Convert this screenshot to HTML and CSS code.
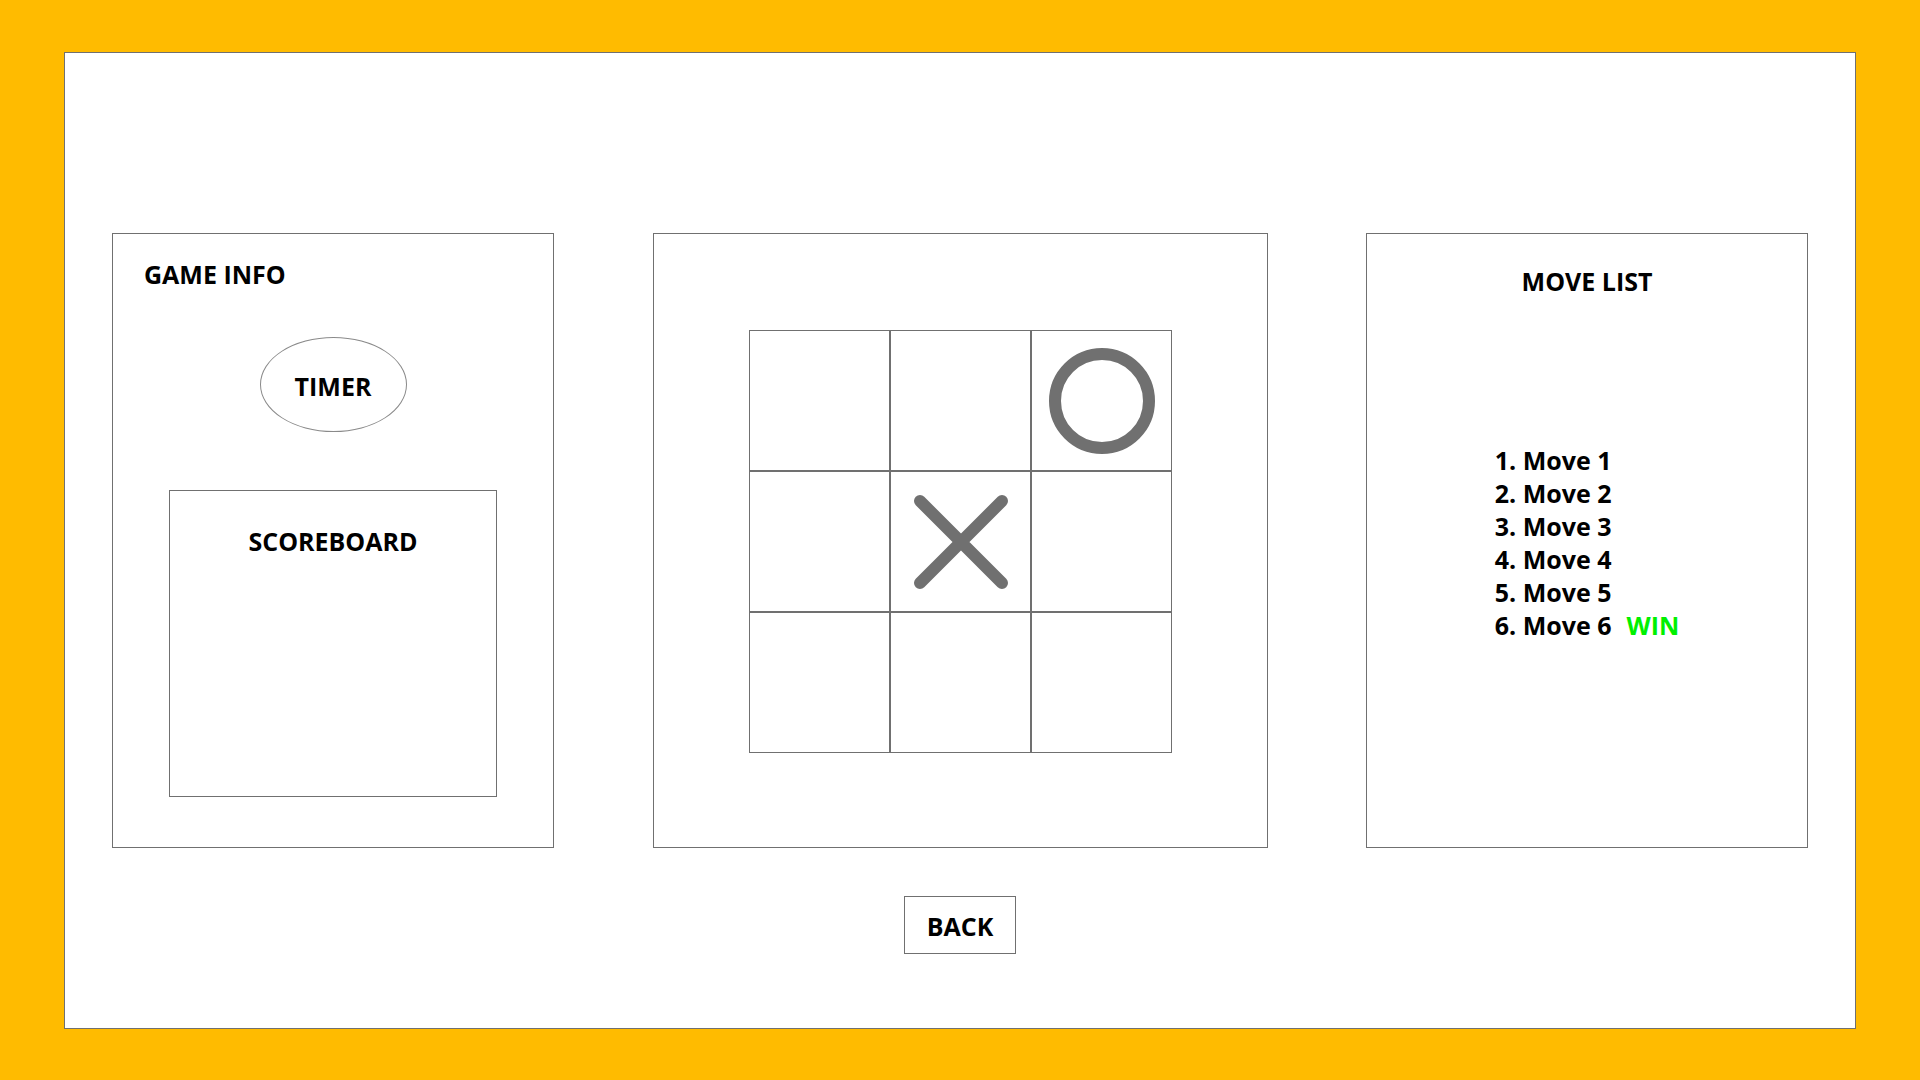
FILE: index.html
```html
<!DOCTYPE html>
<html lang="en">
<head>
<meta charset="utf-8">
<title>Tic Tac Toe</title>
<link rel="stylesheet" href="styles.css">
</head>
<body>
<main class="frame">
  <div class="cards">
    <section class="card info">
      <h2 class="info-title">GAME INFO</h2>
      <div class="timer">TIMER</div>
      <div class="scoreboard">
        <h3 class="score-title">SCOREBOARD</h3>
      </div>
    </section>
    <section class="card board-card">
      <div class="board">
        <div class="cell"></div>
        <div class="cell"></div>
        <div class="cell">
          <svg class="mark" viewBox="0 0 139 139" width="139" height="139"><circle cx="70" cy="70" r="47" fill="none" stroke="#707070" stroke-width="12"/></svg>
        </div>
        <div class="cell"></div>
        <div class="cell">
          <svg class="mark" viewBox="0 0 139 139" width="139" height="139"><path d="M29 29 L111 111 M111 29 L29 111" fill="none" stroke="#707070" stroke-width="12" stroke-linecap="round"/></svg>
        </div>
        <div class="cell"></div>
        <div class="cell"></div>
        <div class="cell"></div>
        <div class="cell"></div>
      </div>
    </section>
    <section class="card moves">
      <h2 class="moves-title">MOVE LIST</h2>
      <ol class="move-list">
        <li>1. Move 1</li>
        <li>2. Move 2</li>
        <li>3. Move 3</li>
        <li>4. Move 4</li>
        <li>5. Move 5</li>
        <li>6. Move 6<span class="win">WIN</span></li>
      </ol>
    </section>
  </div>
  <div class="actions">
    <button class="back" type="button">BACK</button>
  </div>
</main>
</body>
</html>
```
FILE: styles.css
```css
* { box-sizing: border-box; }
html, body { margin: 0; padding: 0; }
body {
  background: #ffbb00;
  font-family: "Open Sans", "Noto Sans", "Liberation Sans", sans-serif;
  font-weight: 700;
  color: #000;
  padding: 52px 64px 51px;
  height: 1080px;
}
.frame {
  background: #fff;
  border: 1px solid #707070;
  height: 977px;
  padding: 180px 47px 0;
}
.cards {
  display: flex;
  justify-content: space-between;
}
.card {
  border: 1px solid #707070;
  height: 615px;
  background: #fff;
}
.info, .moves { width: 442px; }
.board-card { width: 615px; }

.info {
  display: flex;
  flex-direction: column;
  padding: 24px 0 0 31px;
}
.info-title, .moves-title, .score-title {
  margin: 0;
  font-size: 25px;
  line-height: 32px;
  font-weight: 700;
}
.timer {
  align-self: center;
  margin: 47px 0 0 -31px;
  width: 147px;
  height: 95px;
  border: 1px solid #8a8a8a;
  border-radius: 50%;
  display: flex;
  align-items: center;
  justify-content: center;
  font-size: 25px;
  padding-top: 3px;
}
.scoreboard {
  align-self: center;
  margin: 58px 0 0 -31px;
  width: 328px;
  height: 307px;
  border: 1px solid #707070;
  padding-top: 34px;
  text-align: center;
}

.board-card {
  display: flex;
  align-items: center;
  justify-content: center;
  padding-top: 1px;
}
.board {
  display: grid;
  grid-template-columns: repeat(3, 141px);
  grid-template-rows: repeat(3, 141px);
}
.cell {
  border: 1px solid #707070;
  display: flex;
  align-items: center;
  justify-content: center;
}
.mark { display: block; }

.moves {
  display: flex;
  flex-direction: column;
  align-items: center;
  padding-top: 31px;
}
.move-list {
  list-style: none;
  margin: 147px 0 0;
  padding: 0;
  font-size: 25px;
  line-height: 33px;
}
.win {
  color: #00f000;
  margin-left: 15px;
}

.actions {
  display: flex;
  justify-content: center;
  margin-top: 48px;
}
.back {
  width: 112px;
  height: 58px;
  border: 1px solid #707070;
  background: #fff;
  font-family: inherit;
  font-weight: 700;
  font-size: 25px;
  color: #000;
  padding: 2px 0 0;
  border-radius: 0;
  line-height: 32px;
}
```
